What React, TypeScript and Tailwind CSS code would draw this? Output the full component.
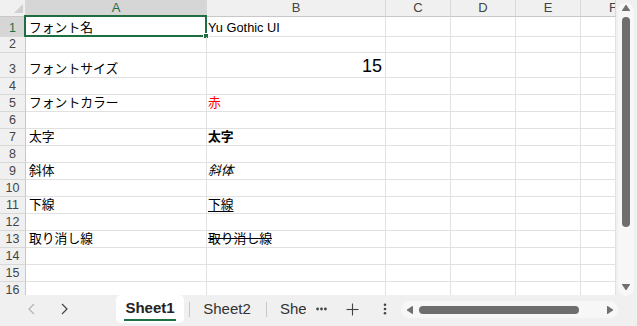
import React from "react";

const FONT = "font-['Liberation_Sans','Noto_Sans_CJK_JP',sans-serif]";

type RowDef = { n: number; h: string; a?: string; b?: React.ReactNode; bRight?: boolean };

const rows: RowDef[] = [
  { n: 1, h: "h-[20px]", a: "フォント名", b: <span>Yu Gothic UI</span> },
  { n: 2, h: "h-[16px]" },
  { n: 3, h: "h-[25px]", a: "フォントサイズ", b: <span className="text-[18px] leading-[22px]">15</span>, bRight: true },
  { n: 4, h: "h-[17px]" },
  { n: 5, h: "h-[17px]", a: "フォントカラー", b: <span className="text-[#ff0000]">赤</span> },
  { n: 6, h: "h-[17px]" },
  { n: 7, h: "h-[17px]", a: "太字", b: <span className="font-bold">太字</span> },
  { n: 8, h: "h-[17px]" },
  { n: 9, h: "h-[17px]", a: "斜体", b: <span className="italic">斜体</span> },
  { n: 10, h: "h-[17px]" },
  { n: 11, h: "h-[17px]", a: "下線", b: <span className="underline underline-offset-2">下線</span> },
  { n: 12, h: "h-[17px]" },
  { n: 13, h: "h-[17px]", a: "取り消し線", b: <span className="line-through">取り消し線</span> },
  { n: 14, h: "h-[17px]" },
  { n: 15, h: "h-[17px]" },
  { n: 16, h: "h-[17px]" },
];

function Row({ r }: { r: RowDef }) {
  const sel = r.n === 1;
  return (
    <div className={`flex ${r.h} shrink-0`}>
      <div
        className={`w-[26px] shrink-0 flex items-end justify-center border-r border-b border-r-[#c8c8c8] border-b-[#d8d8d8] text-[12.5px] leading-[15px] ${
          sel ? "bg-[#d6d6d6] text-[#1e7145]" : "bg-[#f0f0f0] text-[#444]"
        }`}
      >
        {r.n}
      </div>
      <div className="relative w-[181px] shrink-0 flex items-end pl-[3px] border-r border-b border-[#e1e1e1] text-[12.8px] leading-[16px] text-black whitespace-nowrap">
        {r.a}
        {sel && (
          <>
            <div className="absolute left-[-2px] top-[-2px] right-[-1px] bottom-[-1px] border-2 border-[#1e6e42]" />
            <div className="absolute right-[-3px] bottom-[-3px] w-[6px] h-[6px] bg-[#1e6e42] border border-white" />
          </>
        )}
      </div>
      <div
        className={`w-[179px] shrink-0 flex items-end border-r border-b border-[#e1e1e1] text-[12.8px] leading-[16px] text-black whitespace-nowrap ${
          r.bRight ? "justify-end pr-[3px]" : "pl-[1px]"
        }`}
      >
        {r.b}
      </div>
      <div className="w-[65px] shrink-0 border-r border-b border-[#e1e1e1]" />
      <div className="w-[65px] shrink-0 border-r border-b border-[#e1e1e1]" />
      <div className="w-[65px] shrink-0 border-r border-b border-[#e1e1e1]" />
      <div className="w-[35px] shrink-0 border-r border-b border-[#e1e1e1]" />
    </div>
  );
}

function ColHead({ w, label, sel, inner }: { w: string; label: string; sel?: boolean; inner?: string }) {
  return (
    <div
      className={`${w} shrink-0 flex items-center overflow-hidden border-r border-b border-r-[#d8d8d8] border-b-[#c8c8c8] text-[13px] leading-[16px] ${
        sel ? "bg-[#d6d6d6] text-[#1e7145]" : "bg-[#f0f0f0] text-[#444]"
      } ${inner ? "justify-start" : "justify-center"}`}
    >
      {inner ? <div className={`${inner} shrink-0 text-center`}>{label}</div> : label}
    </div>
  );
}

function Tri({ dir }: { dir: "up" | "down" | "left" | "right" }) {
  const pts =
    dir === "up"
      ? "0,6 4,0 8,6"
      : dir === "down"
      ? "0,0 8,0 4,6"
      : dir === "left"
      ? "6,0 6,8 0,4"
      : "0,0 0,8 6,4";
  const w = dir === "up" || dir === "down" ? 8 : 6;
  const h = dir === "up" || dir === "down" ? 6 : 8;
  return (
    <svg width={w} height={h} viewBox={`0 0 ${w} ${h}`} className="shrink-0">
      <polygon points={pts} fill="#707070" strokeLinejoin="round" stroke="#707070" strokeWidth="0.8" />
    </svg>
  );
}

export default function App() {
  return (
    <div className={`w-[637px] h-[326px] bg-[#f0f0f0] flex flex-col overflow-hidden ${FONT}`}>
      <div className="flex h-[295px] shrink-0">
        <div className="w-[616px] h-[295px] bg-white overflow-hidden flex flex-col">
          <div className="flex h-[17px] shrink-0">
            <div className="w-[26px] shrink-0 bg-[#f0f0f0] border-r border-b border-r-[#d8d8d8] border-b-[#c8c8c8] flex items-end justify-end pr-[2px] pb-[3px]">
              <svg width="9" height="9" viewBox="0 0 9 9">
                <polygon points="9,0 9,9 0,9" fill="#d0d0d0" />
              </svg>
            </div>
            <ColHead w="w-[181px]" label="A" sel />
            <ColHead w="w-[179px]" label="B" />
            <ColHead w="w-[65px]" label="C" />
            <ColHead w="w-[65px]" label="D" />
            <ColHead w="w-[65px]" label="E" />
            <ColHead w="w-[35px]" label="F" inner="w-[64px]" />
          </div>
          {rows.map((r) => (
            <Row key={r.n} r={r} />
          ))}
        </div>
        <div className="w-[21px] shrink-0 pl-[2px] pt-[3px]">
          <div className="w-[16px] h-[293px] bg-[#f7f7f7] rounded-full flex flex-col items-center pt-[2px] pb-[6px]">
            <Tri dir="up" />
            <div className="mt-[6px] w-[8px] h-[210px] bg-[#6e6e6e] rounded-full" />
            <div className="flex-1" />
            <Tri dir="down" />
          </div>
        </div>
      </div>
      <div className="flex h-[31px] shrink-0 items-start">
        <div className="w-[16px] shrink-0" />
        <div className="w-[32px] h-[28px] shrink-0 flex items-center justify-center text-[#b4b4b4]">
          <svg width="10" height="12" viewBox="0 0 10 12" fill="none" stroke="currentColor" strokeWidth="1.2">
            <polyline points="7,1 2,6 7,11" />
          </svg>
        </div>
        <div className="w-[32px] h-[28px] shrink-0 flex items-center justify-center text-[#444]">
          <svg width="10" height="12" viewBox="0 0 10 12" fill="none" stroke="currentColor" strokeWidth="1.2">
            <polyline points="3,1 8,6 3,11" />
          </svg>
        </div>
        <div className="w-[36px] shrink-0" />
        <div className="w-[68px] h-[28px] shrink-0 bg-white rounded-[5px] flex flex-col items-center justify-center">
          <span className="text-[15px] leading-[18px] font-bold text-[#222] mt-[1px]">Sheet1</span>
          <div className="w-[52px] h-[2px] bg-[#1e7145] mt-[2px]" />
        </div>
        <div className="w-[10px] h-[28px] shrink-0 flex items-center justify-center">
          <div className="w-px h-[15px] bg-[#c8c8c8]" />
        </div>
        <div className="w-[66px] h-[28px] shrink-0 flex items-center justify-center text-[15px] text-[#333]">Sheet2</div>
        <div className="w-[12px] h-[28px] shrink-0 flex items-center justify-center">
          <div className="w-px h-[15px] bg-[#c8c8c8]" />
        </div>
        <div className="w-[34px] h-[28px] shrink-0 flex items-center pl-[8px] text-[15px] text-[#333] overflow-hidden whitespace-nowrap">
          She
        </div>
        <div className="w-[30px] h-[28px] shrink-0 flex items-center justify-center">
          <svg width="11" height="4" viewBox="0 0 11 4">
            <circle cx="1.6" cy="2" r="1.4" fill="#444" />
            <circle cx="5.5" cy="2" r="1.4" fill="#444" />
            <circle cx="9.4" cy="2" r="1.4" fill="#444" />
          </svg>
        </div>
        <div className="w-[32px] h-[28px] shrink-0 flex items-center justify-center">
          <svg width="13" height="13" viewBox="0 0 13 13" stroke="#444" strokeWidth="1.1">
            <line x1="6.5" y1="0.5" x2="6.5" y2="12.5" />
            <line x1="0.5" y1="6.5" x2="12.5" y2="6.5" />
          </svg>
        </div>
        <div className="w-[33px] h-[28px] shrink-0 flex items-center justify-center">
          <svg width="4" height="12" viewBox="0 0 4 12">
            <circle cx="2" cy="1.8" r="1.3" fill="#444" />
            <circle cx="2" cy="6" r="1.3" fill="#444" />
            <circle cx="2" cy="10.2" r="1.3" fill="#444" />
          </svg>
        </div>
        <div className="w-[217px] h-[17px] mt-[6px] shrink-0 bg-[#f7f7f7] rounded-full flex items-center pl-[6px] pr-[5px]">
          <Tri dir="left" />
          <div className="ml-[6px] w-[160px] h-[8px] bg-[#6e6e6e] rounded-full" />
          <div className="flex-1" />
          <Tri dir="right" />
        </div>
      </div>
    </div>
  );
}
